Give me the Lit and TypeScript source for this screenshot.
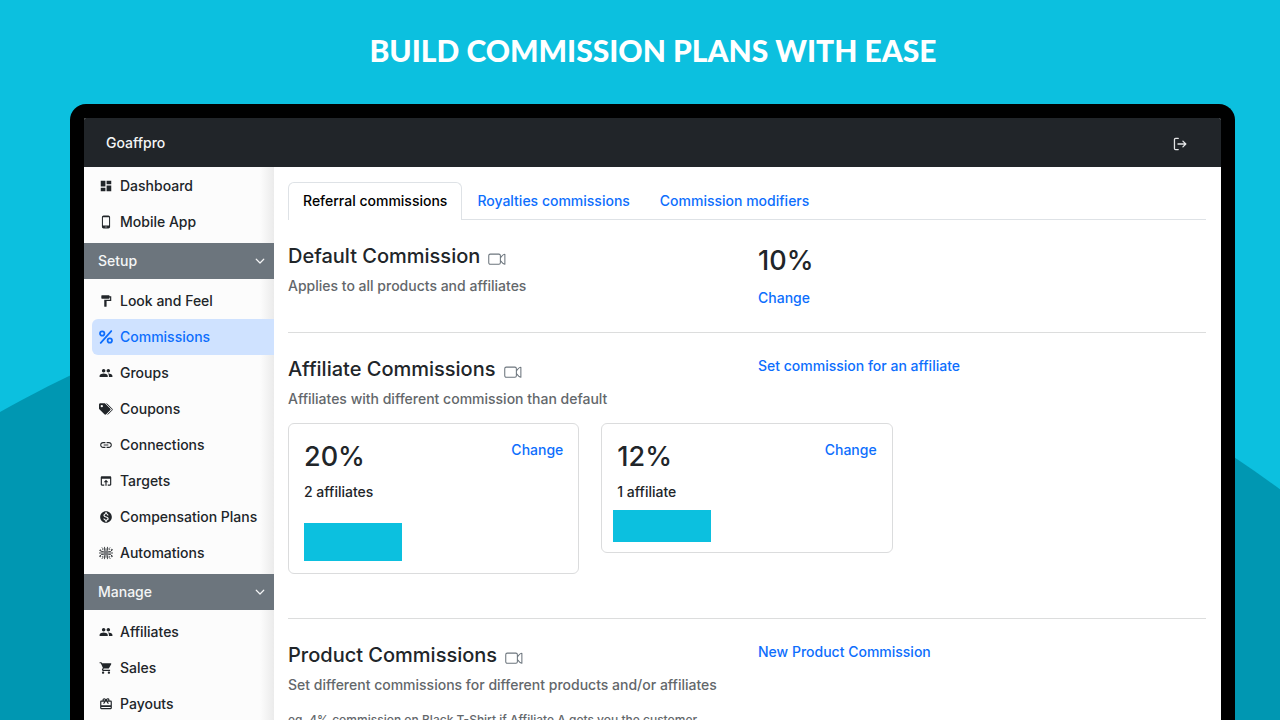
import { LitElement, html, svg, css, nothing } from "lit";
import { customElement, property, state } from "lit/decorators.js";
import { classMap } from "lit/directives/class-map.js";

const shape = (d: string) => svg`<path fill="currentColor" d=${d}></path>`;

const ICONS: Record<string, unknown> = {
  dashboard: shape("M3 13h8V3H3v10zm0 8h8v-6H3v6zm10 0h8V11h-8v10zm0-18v6h8V3h-8z"),
  phone: shape(
    "M16 1H8C6.34 1 5 2.34 5 4v16c0 1.66 1.34 3 3 3h8c1.66 0 3-1.34 3-3V4c0-1.66-1.34-3-3-3zm-2 20h-4v-1h4v1zm3.25-3H6.75V4h10.5v14z"
  ),
  paint: shape(
    "M18 4V3c0-.55-.45-1-1-1H5c-.55 0-1 .45-1 1v4c0 .55.45 1 1 1h12c.55 0 1-.45 1-1V6h1v4H9v11c0 .55.45 1 1 1h2c.55 0 1-.45 1-1v-9h8V4h-3z"
  ),
  percent: svg`<g fill="none" stroke="currentColor" stroke-width="3" stroke-linecap="round">
    <circle cx="5.5" cy="6" r="3.8"></circle><circle cx="18.5" cy="18" r="3.8"></circle><path d="M21 1.8L3 22.2"></path></g>`,
  group: shape(
    "M16 11c1.66 0 2.99-1.34 2.99-3S17.66 5 16 5c-1.66 0-3 1.34-3 3s1.34 3 3 3zm-8 0c1.66 0 2.99-1.34 2.99-3S9.66 5 8 5C6.34 5 5 6.34 5 8s1.34 3 3 3zm0 2c-2.33 0-7 1.17-7 3.5V19h14v-2.5c0-2.33-4.67-3.5-7-3.5zm8 0c-.29 0-.62.02-.97.05 1.16.84 1.97 1.97 1.97 3.45V19h6v-2.5c0-2.33-4.67-3.5-7-3.5z"
  ),
  tags: svg`<path fill="currentColor" fill-rule="evenodd" d="M0 4.5v6.6c0 .6.2 1.100.6 1.500l8.600 8.600c.9.9 2.200.9 3.100 0l6.900-6.900c.9-.9.9-2.200 0-3.100L10.600 2.600c-.4-.4-1-.6-1.500-.6H2.200C1 2 0 3.100 0 4.500zM4.800 5a2 2 0 110 4 2 2 0 010-4z"></path>
    <path fill="none" stroke="currentColor" stroke-width="1.700" stroke-linecap="round" d="M13.500 3l8.800 8.800c.7.7.7 1.500 0 2.200l-7 7"></path>`,
  link: shape(
    "M3.9 12c0-1.710 1.390-3.100 3.100-3.100h4V7H7c-2.760 0-5 2.240-5 5s2.240 5 5 5h4v-1.900H7c-1.710 0-3.100-1.390-3.100-3.100zM8 13h8v-2H8v2zm9-6h-4v1.900h4c1.710 0 3.100 1.390 3.100 3.100s-1.390 3.100-3.100 3.100h-4V17h4c2.760 0 5-2.240 5-5s-2.240-5-5-5z"
  ),
  target: shape(
    "M19 4H5c-1.110 0-2 .9-2 2v12c0 1.100.89 2 2 2h4v-2H5V8h14v10h-4v2h4c1.100 0 2-.9 2-2V6c0-1.100-.89-2-2-2zm-7 6l-4 4h3v6h2v-6h3l-4-4z"
  ),
  coin: shape(
    "M12 2C6.480 2 2 6.480 2 12s4.480 10 10 10 10-4.480 10-10S17.520 2 12 2zm1.410 16.090V20h-2.670v-1.930c-1.710-.36-3.160-1.460-3.270-3.400h1.960c.1 1.050.82 1.870 2.650 1.870 1.960 0 2.400-.98 2.400-1.590 0-.83-.44-1.610-2.670-2.140-2.480-.6-4.180-1.620-4.180-3.670 0-1.720 1.390-2.840 3.110-3.210V4h2.670v1.950c1.860.45 2.790 1.860 2.850 3.390H14.300c-.05-1.110-.64-1.870-2.220-1.870-1.500 0-2.400.68-2.400 1.640 0 .84.65 1.390 2.670 1.910s4.180 1.390 4.180 3.910c-.01 1.830-1.380 2.830-3.120 3.160z"
  ),
  circuit: svg`<g fill="none" stroke="currentColor" stroke-width="1.400">
    <rect x="8" y="8" width="8" height="8" fill="currentColor" fill-opacity=".6" stroke="none"></rect>
    <path d="M9.500 8V1.500M12 8V4M14.500 8V1.500M9.500 16v6.500M12 16v4M14.500 16v6.500M8 9.500H4L2.500 8M8 12H0M8 14.500H4L2 17M16 9.500h4L22 7M16 12h8M16 14.500h4L22 17M6.500 7V4L5 2.500M17.500 7V4L19 2.500M6.500 17v3L5 22M17.500 17v3l2 2"></path>
    <circle cx="2.300" cy="7.500" r="1"></circle><circle cx="22" cy="6.500" r="1"></circle><circle cx="2" cy="17.500" r="1"></circle><circle cx="22" cy="17.500" r="1"></circle></g>`,
  cart: shape(
    "M7 18c-1.100 0-1.990.9-1.990 2S5.900 22 7 22s2-.9 2-2-.9-2-2-2zM1 2v2h2l3.600 7.590-1.350 2.450c-.16.28-.25.61-.25.96 0 1.100.9 2 2 2h12v-2H7.420c-.14 0-.25-.11-.25-.25l.03-.12.9-1.630h7.450c.75 0 1.410-.41 1.750-1.030l3.580-6.490A1 1 0 0020 4H5.210l-.94-2H1zm16 16c-1.100 0-1.990.9-1.990 2s.89 2 1.990 2 2-.9 2-2-.9-2-2-2z"
  ),
  gift: shape(
    "M20 6h-2.180c.11-.31.18-.65.18-1a2.996 2.996 0 00-5.500-1.650l-.5.67-.5-.68C10.960 2.540 10.050 2 9 2 7.340 2 6 3.340 6 5c0 .35.07.69.18 1H4c-1.110 0-1.990.89-1.990 2L2 19c0 1.110.89 2 2 2h16c1.110 0 2-.89 2-2V8c0-1.110-.89-2-2-2zm-5-2c.55 0 1 .45 1 1s-.45 1-1 1-1-.45-1-1 .45-1 1-1zM9 4c.55 0 1 .45 1 1s-.45 1-1 1-1-.45-1-1 .45-1 1-1zm11 15H4v-2h16v2zm0-5H4V8h5.080L7 10.830 8.620 12 11 8.760l1-1.360 1 1.360L15.380 12 17 10.830 14.920 8H20v6z"
  ),
  chevron: svg`<path fill="none" stroke="currentColor" stroke-width="2.400" stroke-linecap="round" stroke-linejoin="round" d="M4.500 8.500l7.500 7.500 7.500-7.500"></path>`,
  logout: svg`<g fill="none" stroke="currentColor" stroke-width="2.200" stroke-linecap="round" stroke-linejoin="round">
    <path d="M9 2.500H4.500a2 2 0 00-2 2v15a2 2 0 002 2H9M8.500 12H22M17 7l5 5-5 5"></path></g>`,
  video: svg`<g fill="none" stroke="currentColor" stroke-width="1.400" stroke-linejoin="round">
    <rect x="1" y="5.500" width="15.500" height="13.500" rx="2"></rect><path d="M16.500 10.500l3-3.500c1-1 3-1.300 3-1.300v13.200s-2-.4-3-1.400l-3-3.500"></path></g>`,
};

@customElement("ui-icon")
class UiIcon extends LitElement {
  static styles = css`
    :host {
      display: inline-flex;
      flex: none;
      width: 14px;
      height: 14px;
    }
    .glyph {
      display: block;
      width: 100%;
      height: 100%;
    }
  `;
  @property() name = "";
  render() {
    return html`<svg class="glyph" viewBox="0 0 24 24" aria-hidden="true">${ICONS[this.name]}</svg>`;
  }
}

interface NavItem {
  icon: string;
  label: string;
}
interface NavGroup {
  title?: string;
  items: NavItem[];
}

const NAV: NavGroup[] = [
  {
    items: [
      { icon: "dashboard", label: "Dashboard" },
      { icon: "phone", label: "Mobile App" },
    ],
  },
  {
    title: "Setup",
    items: [
      { icon: "paint", label: "Look and Feel" },
      { icon: "percent", label: "Commissions" },
      { icon: "group", label: "Groups" },
      { icon: "tags", label: "Coupons" },
      { icon: "link", label: "Connections" },
      { icon: "target", label: "Targets" },
      { icon: "coin", label: "Compensation Plans" },
      { icon: "circuit", label: "Automations" },
    ],
  },
  {
    title: "Manage",
    items: [
      { icon: "group", label: "Affiliates" },
      { icon: "cart", label: "Sales" },
      { icon: "gift", label: "Payouts" },
    ],
  },
];

@customElement("side-nav")
class SideNav extends LitElement {
  static styles = css`
    :host {
      display: block;
      padding-top: 1px;
      background: linear-gradient(to left, #ebebeb, #fcfcfc 14px);
    }
    .group {
      display: flex;
      align-items: center;
      justify-content: space-between;
      width: 100%;
      height: 36px;
      margin: 3px 0 4px;
      padding: 0 8px 0 14px;
      border: 0;
      background: #6c757d;
      color: #f4f5f6;
      font: inherit;
      cursor: pointer;
    }
    .group ui-icon {
      width: 12px;
      height: 12px;
    }
    .item {
      display: flex;
      align-items: center;
      gap: 7px;
      height: 36px;
      margin-left: 8px;
      padding-left: 7px;
      border-radius: 6px 0 0 6px;
      color: #212529;
      text-decoration: none;
      white-space: nowrap;
    }
    .current {
      background: #cfe2ff;
      color: #0d6efd;
    }
  `;
  @state() private current = "Commissions";
  @state() private closed: string[] = [];

  private toggle(title: string) {
    this.closed = this.closed.includes(title)
      ? this.closed.filter((t) => t !== title)
      : [...this.closed, title];
  }

  render() {
    return html`<nav>
      ${NAV.map((group) => {
        const open = !group.title || !this.closed.includes(group.title);
        return html`${group.title
          ? html`<button class="group" type="button" aria-expanded=${open ? "true" : "false"} @click=${() => this.toggle(group.title!)}>
              ${group.title}<ui-icon name="chevron"></ui-icon>
            </button>`
          : nothing}
        ${open
          ? group.items.map(
              (item) => html`<a
                href="#"
                class=${classMap({ item: true, current: item.label === this.current })}
                @click=${() => (this.current = item.label)}
                ><ui-icon name=${item.icon}></ui-icon>${item.label}</a
              >`
            )
          : nothing}`;
      })}
    </nav>`;
  }
}

@customElement("commission-card")
class CommissionCard extends LitElement {
  static styles = css`
    :host {
      display: block;
      padding: 14px 15px 12px;
      border: 1px solid #dbdcdd;
      border-radius: 6px;
    }
    .top {
      display: flex;
      justify-content: space-between;
      align-items: flex-start;
    }
    .rate {
      margin: 0;
      font-size: 27px;
      font-weight: 500;
      line-height: 38px;
    }
    .change {
      color: #0d6efd;
      text-decoration: none;
      line-height: 24px;
    }
    .count {
      margin: 5px 0 0;
      line-height: 22px;
      font-size: 14px;
    }
    .block {
      width: 98px;
      height: 38px;
      margin-top: 20px;
      background: #0cc0df;
    }
    :host([compact]) .block {
      height: 32px;
      margin-top: 7px;
      margin-left: -4px;
    }
    :host([compact]) {
      padding-bottom: 10px;
    }
  `;
  @property() rate = "";
  @property() count = "";
  @property({ type: Boolean, reflect: true }) compact = false;
  render() {
    return html`<div class="top">
        <h3 class="rate">${this.rate}</h3>
        <a class="change" href="#">Change</a>
      </div>
      <p class="count">${this.count}</p>
      <div class="block"></div>`;
  }
}

const TABS = ["Referral commissions", "Royalties commissions", "Commission modifiers"];

@customElement("app-root")
class AppRoot extends LitElement {
  static styles = css`
    :host {
      position: relative;
      display: flex;
      flex-direction: column;
      height: 100vh;
      overflow: hidden;
      background: #0cc0df;
      color: #212529;
      font: 500 14px/20px Inter, "Liberation Sans", sans-serif;
    }
    .backdrop {
      position: absolute;
      inset: 0;
      width: 100%;
      height: 100%;
    }
    .headline {
      position: relative;
      margin: 0;
      padding: 30px 0 34px 26px;
      color: #fff;
      font: 900 30px/40px Lato, sans-serif;
      text-align: center;
    }
    .device {
      position: relative;
      flex: 1;
      min-height: 0;
      display: flex;
      flex-direction: column;
      margin: 0 45px 0 70px;
      border: 14px solid #000;
      border-bottom: 0;
      border-radius: 16px 16px 0 0;
      background: #fff;
      overflow: hidden;
    }
    .topbar {
      flex: none;
      display: flex;
      align-items: center;
      justify-content: space-between;
      height: 49px;
      padding: 0 34px 0 22px;
      background: #212529;
      color: #f4f5f6;
    }
    .logout {
      display: flex;
      padding: 0;
      margin-top: 3px;
      border: 0;
      background: none;
      color: #e4e5e6;
    }
    .body {
      flex: 1;
      min-height: 0;
      display: grid;
      grid-template-columns: 190px 1fr;
    }
    .content {
      min-width: 0;
      padding: 15px 15px 0 14px;
    }
    .tabs {
      display: flex;
      border-bottom: 1px solid #dee2e6;
    }
    .tab {
      padding: 0 14px 2px;
      height: 38px;
      margin-bottom: -1px;
      border: 1px solid transparent;
      border-bottom: 0;
      border-radius: 6px 6px 0 0;
      background: none;
      color: #0d6efd;
      font: inherit;
    }
    .selected {
      border-color: #dee2e6;
      background: #fff;
      color: #000;
    }
    .section {
      display: grid;
      grid-template-columns: 1fr 1fr;
      column-gap: 22px;
      padding: 20px 0 21px;
      border-bottom: 1px solid #dcdddd;
    }
    .section:last-child {
      border-bottom: 0;
    }
    .title {
      display: flex;
      align-items: center;
      gap: 8px;
      margin: 0;
      font-size: 20px;
      font-weight: 500;
      line-height: 32px;
    }
    .title ui-icon {
      width: 18px;
      height: 18px;
      margin-top: 6px;
      color: #6c757d;
    }
    .muted {
      margin: 3px 0 0;
      color: #63676b;
      line-height: 22px;
    }
    .example {
      margin-top: 13px;
      font-size: 12px;
    }
    .big {
      margin: 2px 0 5px;
      font-size: 27px;
      font-weight: 500;
      line-height: 38px;
    }
    .link {
      color: #0d6efd;
      text-decoration: none;
      line-height: 26px;
    }
    .cards {
      grid-column: 1 / -1;
      display: grid;
      grid-template-columns: repeat(3, 1fr);
      align-items: start;
      gap: 22px;
      padding: 13px 0 23px;
    }
  `;
  @state() private tab = TABS[0];

  private heading(text: string) {
    return html`<h2 class="title">${text}<ui-icon name="video"></ui-icon></h2>`;
  }

  render() {
    return html`
      <svg class="backdrop" viewBox="0 0 1280 720" preserveAspectRatio="xMidYMax slice" aria-hidden="true">
        <circle cx="580" cy="1443" r="1183" fill="#0097b2"></circle>
      </svg>
      <h1 class="headline">BUILD COMMISSION PLANS WITH EASE</h1>
      <div class="device">
        <header class="topbar">
          <span>Goaffpro</span>
          <button class="logout" type="button" aria-label="Log out"><ui-icon name="logout"></ui-icon></button>
        </header>
        <div class="body">
          <side-nav></side-nav>
          <main class="content">
            <div class="tabs" role="tablist">
              ${TABS.map(
                (t) => html`<button
                  type="button"
                  role="tab"
                  aria-selected=${t === this.tab ? "true" : "false"}
                  class=${classMap({ tab: true, selected: t === this.tab })}
                  @click=${() => (this.tab = t)}
                >
                  ${t}
                </button>`
              )}
            </div>
            <section class="section">
              <div>
                ${this.heading("Default Commission")}
                <p class="muted">Applies to all products and affiliates</p>
              </div>
              <div>
                <p class="big">10%</p>
                <a class="link" href="#">Change</a>
              </div>
            </section>
            <section class="section">
              <div>
                ${this.heading("Affiliate Commissions")}
                <p class="muted">Affiliates with different commission than default</p>
              </div>
              <div><a class="link" href="#">Set commission for an affiliate</a></div>
              <div class="cards">
                <commission-card rate="20%" count="2 affiliates"></commission-card>
                <commission-card rate="12%" count="1 affiliate" compact></commission-card>
              </div>
            </section>
            <section class="section">
              <div>
                ${this.heading("Product Commissions")}
                <p class="muted">Set different commissions for different products and/or affiliates</p>
                <p class="muted example">eg. 4% commission on Black T-Shirt if Affiliate A gets you the customer</p>
              </div>
              <div><a class="link" href="#">New Product Commission</a></div>
            </section>
          </main>
        </div>
      </div>
    `;
  }
}
